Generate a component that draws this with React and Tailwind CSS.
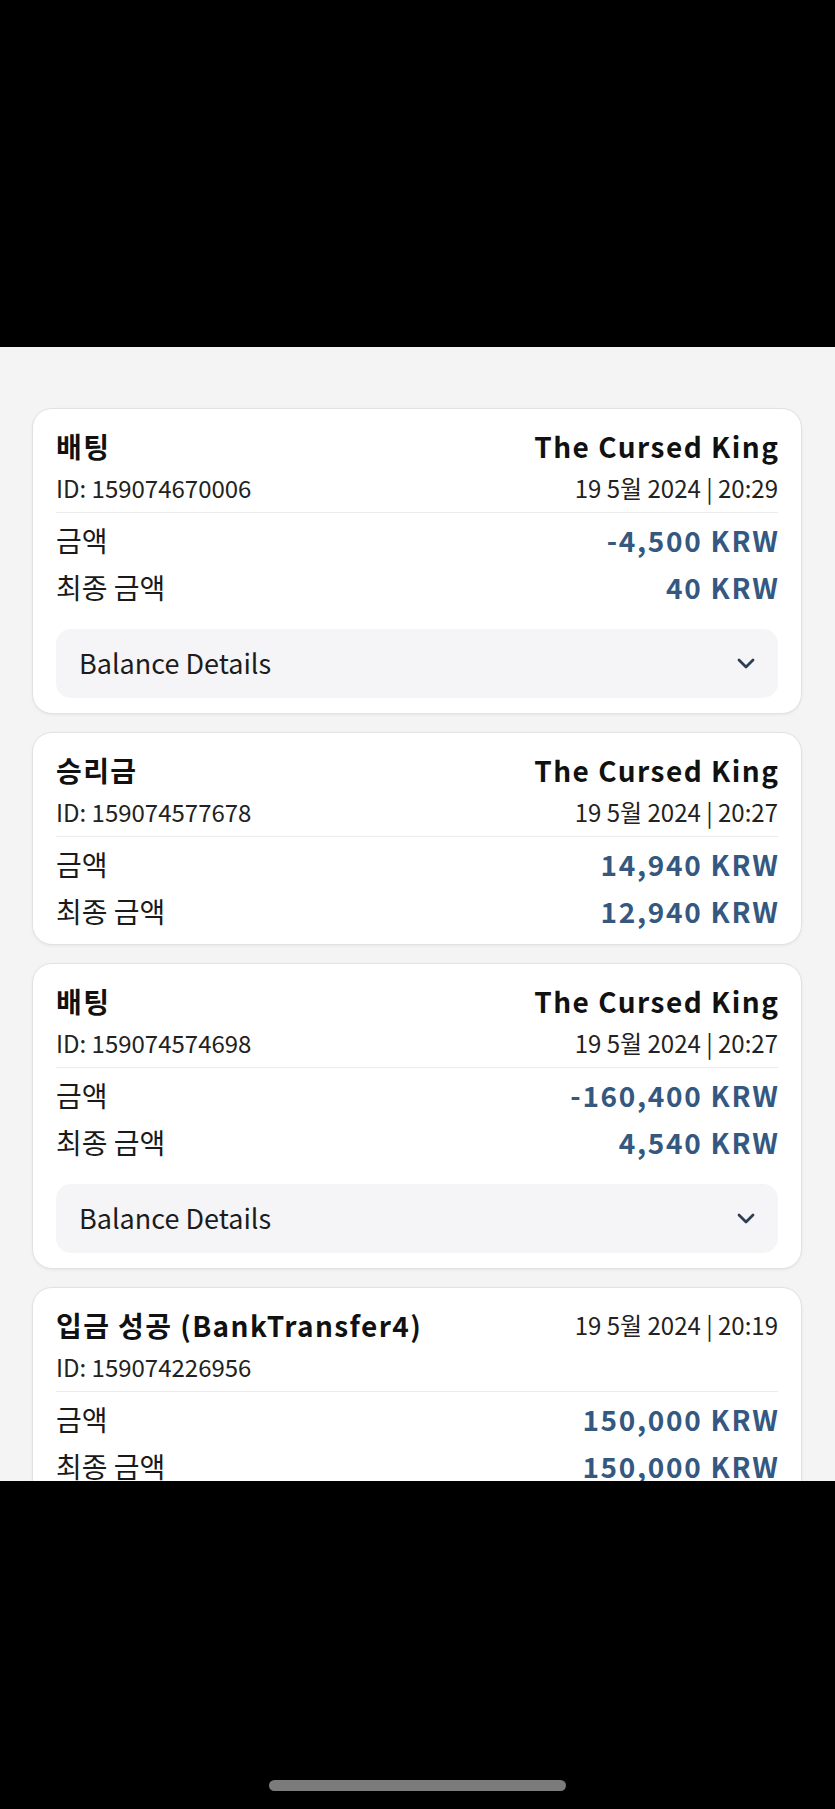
import React from 'react';

const font = { fontFamily: '"Noto Sans CJK KR", "Noto Sans", sans-serif' };

const txList = [
  {
    type: '배팅',
    game: 'The Cursed King',
    id: '159074670006',
    date: '19 5월 2024 | 20:29',
    amount: '-4,500 KRW',
    final: '40 KRW',
    details: true,
  },
  {
    type: '승리금',
    game: 'The Cursed King',
    id: '159074577678',
    date: '19 5월 2024 | 20:27',
    amount: '14,940 KRW',
    final: '12,940 KRW',
    details: false,
  },
  {
    type: '배팅',
    game: 'The Cursed King',
    id: '159074574698',
    date: '19 5월 2024 | 20:27',
    amount: '-160,400 KRW',
    final: '4,540 KRW',
    details: true,
  },
  {
    type: '입금 성공 (BankTransfer4)',
    game: null,
    id: '159074226956',
    date: '19 5월 2024 | 20:19',
    amount: '150,000 KRW',
    final: '150,000 KRW',
    details: false,
  },
];

function Chevron() {
  return (
    <svg width="18" height="11" viewBox="0 0 18 11" fill="none">
      <polyline points="2,2 9,9 16,2" stroke="#2c3d58" strokeWidth="2.8" strokeLinecap="round" strokeLinejoin="round" />
    </svg>
  );
}

function TxCard({ tx }) {
  return (
    <div className="shrink-0 bg-white border border-[#e2e2e5] rounded-[20px] shadow-[0_1px_3px_rgba(0,0,0,0.06)] px-[23px] pt-[19px] pb-[10px]">
      <div className="flex justify-between items-center h-[36px]">
        <span className="text-[28px] font-bold text-[#111] leading-[36px] tracking-[1.4px]">{tx.type}</span>
        {tx.game ? (
          <span className="text-[28px] font-bold text-[#111] leading-[36px] tracking-[1.5px] -mr-[1.5px]">{tx.game}</span>
        ) : (
          <span className="text-[24px] text-[#222] leading-[36px]">{tx.date}</span>
        )}
      </div>
      <div className="flex justify-between items-center h-[32px] mt-[8px] mb-[8px]">
        <span className="text-[24px] text-[#222] leading-[32px]">ID: {tx.id}</span>
        {tx.game && <span className="text-[24px] text-[#222] leading-[32px]">{tx.date}</span>}
      </div>
      <div className="border-t border-[#ececee] pt-[3px]">
        <div className="flex justify-between items-center h-[47px]">
          <span className="text-[28px] text-[#1a1a1a]">금액</span>
          <span className="text-[28px] font-bold text-[#34587f] tracking-[1.7px] -mr-[1.7px]">{tx.amount}</span>
        </div>
        <div className="flex justify-between items-center h-[47px]">
          <span className="text-[28px] text-[#1a1a1a]">최종 금액</span>
          <span className="text-[28px] font-bold text-[#34587f] tracking-[1.7px] -mr-[1.7px]">{tx.final}</span>
        </div>
      </div>
      {tx.details && (
        <div className="mt-[19px] mb-[5px] h-[69px] rounded-[15px] bg-[#f5f5f7] flex items-center justify-between pl-[23px] pr-[23px]">
          <span className="text-[27px] text-[#1c1c1c]">Balance Details</span>
          <Chevron />
        </div>
      )}
    </div>
  );
}

export default function App() {
  return (
    <div className="w-[835px] h-[1809px] bg-black flex flex-col" style={font}>
      <div className="h-[347px] shrink-0" />
      <div className="h-[1134px] shrink-0 bg-[#f4f4f4] overflow-hidden pl-[32px] pr-[33px] pt-[61px] flex flex-col gap-[18px]">
        {txList.map((tx) => (
          <TxCard key={tx.id} tx={tx} />
        ))}
      </div>
      <div className="flex-1 flex justify-center pt-[299px]">
        <div className="w-[297px] h-[11px] rounded-full bg-[#7b7b7b]" />
      </div>
    </div>
  );
}
